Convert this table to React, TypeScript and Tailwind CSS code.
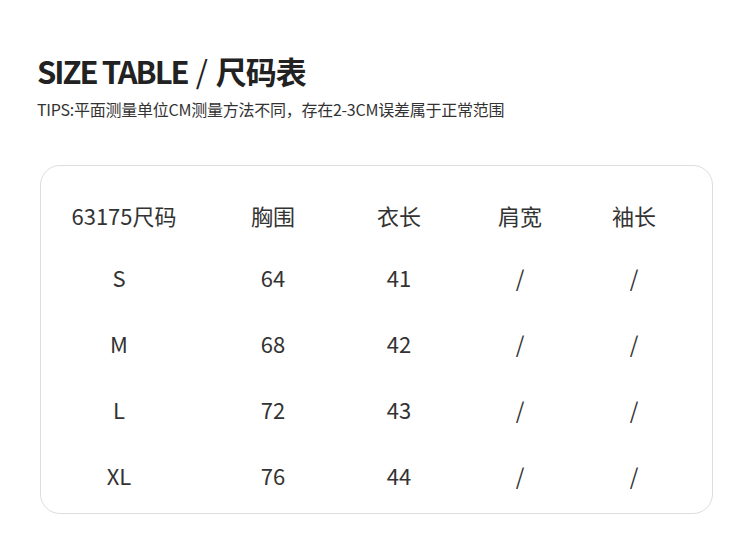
const columns = [
  { w: 'w-[166px]' },
  { w: 'w-[132px]' },
  { w: 'w-[120px]' },
  { w: 'w-[122px]' },
  { w: 'w-[106px]' },
];

const header = ['63175尺码', '胸围', '衣长', '肩宽', '袖长'];

const rows = [
  ['S', '64', '41', '/', '/'],
  ['M', '68', '42', '/', '/'],
  ['L', '72', '43', '/', '/'],
  ['XL', '76', '44', '/', '/'],
];

function Row({ cells, h, first }: { cells: string[]; h: string; first?: string }) {
  return (
    <div className={`flex items-center ${h}`}>
      {cells.map((c, i) => (
        <div key={i} className={`${columns[i].w} text-center ${i === 0 ? first ?? '' : ''}`}>
          {c}
        </div>
      ))}
    </div>
  );
}

export default function App() {
  return (
    <div
      className="w-[750px] h-[556px] bg-white text-[#333]"
      style={{ fontFamily: '"Noto Sans CJK SC", "Noto Sans", sans-serif' }}
    >
      <div className="pl-[37px] pt-[51px]">
        <h1 className="flex items-center text-[31px] leading-[40px] font-bold text-[#222]">
          <span className="tracking-[-2px]">SIZE TABLE</span>
          <span className="font-normal mx-[8px]">/</span>
          <span className="tracking-[-1px]">尺码表</span>
        </h1>
        <p className="mt-[8px] text-[16px] leading-[20px] tracking-[-0.25px] text-[#333]">
          TIPS:平面测量单位CM测量方法不同，存在2-3CM误差属于正常范围
        </p>
      </div>

      <div className="ml-[40px] mt-[46px] w-[673px] h-[349px] rounded-[20px] border border-[#ddd] pt-[19px] text-[22px] leading-none">
        <Row cells={header} h="h-[59px]" />
        {rows.map((r) => (
          <Row key={r[0]} cells={r} h="h-[66px]" first="pr-[10px]" />
        ))}
      </div>
    </div>
  );
}
